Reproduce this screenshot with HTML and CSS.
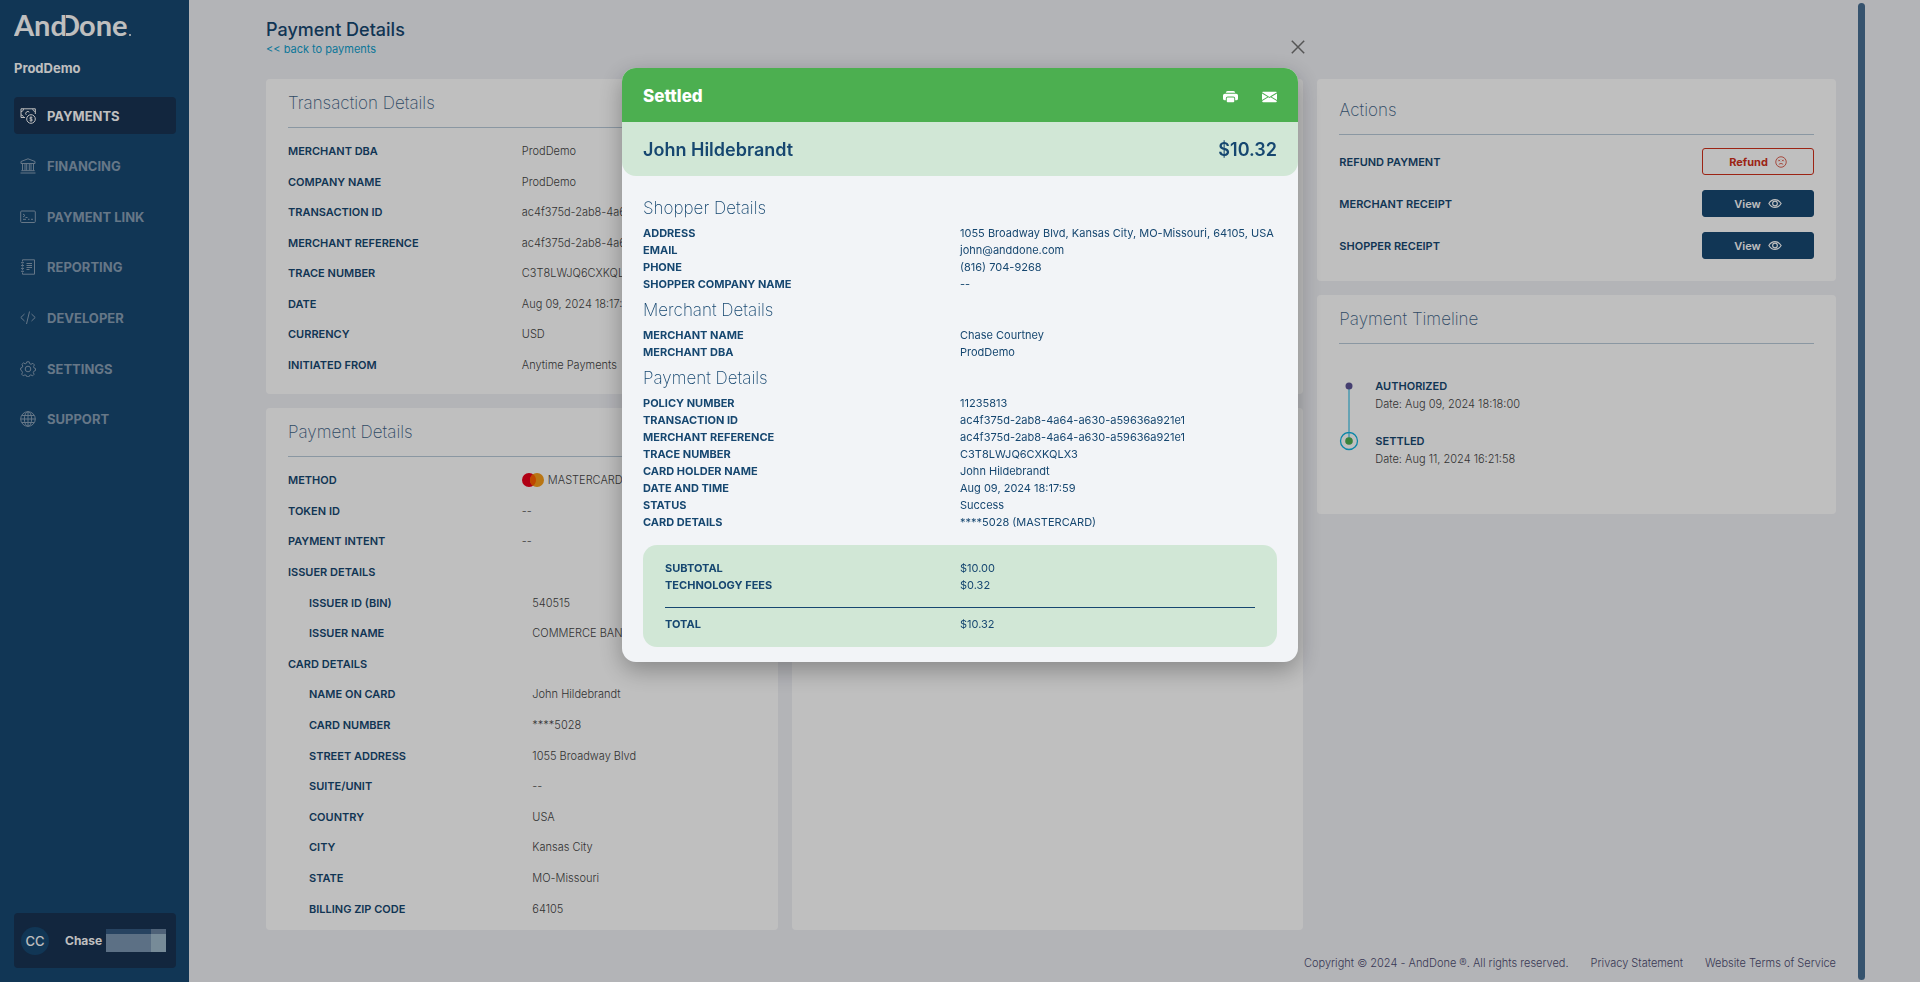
FILE: index.html
```html
<!DOCTYPE html>
<html lang="en">
<head>
<meta charset="utf-8">
<title>Payment Details</title>
<link rel="stylesheet" href="styles.css">
</head>
<body>
<div class="app">
  <aside class="sidebar">
    <svg class="logo" viewBox="0 0 120 38" role="img" aria-label="AndDone">
      <defs><clipPath id="bowl"><rect x="52" y="0" width="30" height="38"/></clipPath></defs>
      <text x="0" y="29">And</text>
      <text x="44" y="29" clip-path="url(#bowl)">D</text>
      <text x="65" y="29">one</text>
      <circle cx="116" cy="28" r="1"/>
    </svg>
    <p class="tenant">ProdDemo</p>
    <nav class="nav">
      <a class="nav-item active" href="#">
        <svg class="icon" viewBox="0 0 16 16"><path d="M5 9.500H1V.8h14.300v5.200M1 3.500C2.600 3.500 3.500 2.500 3.500.8M12.800.8c0 1.500.8 2.500 2.500 2.700M1 7c1.500 0 2.300.8 2.500 2.500"/><path d="M6.200 6.800A2 2 0 1 1 9.300 4.200"/><circle cx="11" cy="11" r="4.300"/><path d="M12.400 9.700c-.7-.8-2.700-.7-2.700.4s2.700.7 2.700 1.900-2 1.200-2.800.3M11 8.600v4.900"/></svg>PAYMENTS</a>
      <a class="nav-item" href="#">
        <svg class="icon" viewBox="0 0 16 16"><path d="M1 5.500v-2L8 .8l7 2.700v2zM2.500 5.500v7M5 5.500v7M6.700 5.500v7M9.300 5.500v7M11 5.500v7M13.500 5.500v7M1.300 12.700h13.400M.5 15h15"/></svg>FINANCING</a>
      <a class="nav-item" href="#">
        <svg class="icon" viewBox="0 0 16 16"><rect x=".7" y="2" width="14.600" height="11.500" rx="1"/><path d="M3 5l2 1.500L3 8M3 10.300h3M5.500 8.500h2M8 10.300h1.500M11 10.300h2"/></svg>PAYMENT LINK</a>
      <a class="nav-item" href="#">
        <svg class="icon" viewBox="0 0 16 16"><path d="M2.500 2.500V.8h12v14.400h-12v-1.700M2.500 4.800v1M2.500 7.500v1M2.500 10.200v1M1 3.700h3M1 6.600h3M1 9.400h3M1 12.300h3M6.500 4.500h5.500M6.500 6.500h5.500M6.500 8.500h5.500M6.500 10.500h3"/></svg>REPORTING</a>
      <a class="nav-item" href="#">
        <svg class="icon" viewBox="0 0 16 16"><path d="M4.500 4L.8 7.500l3.700 3.500M11.500 4l3.700 3.500-3.700 3.500M9.500 1.500l-3 12.500"/></svg>DEVELOPER</a>
      <a class="nav-item" href="#">
        <svg class="icon" viewBox="0 0 16 16"><circle cx="8" cy="8" r="2.800"/><path d="M6.800.8h2.400l.5 1.900 1.300.6 1.900-1 1.500 1.600-.9 1.800.5 1.200 1.500.6v2l-1.700.8-.5 1.300.8 1.700-1.500 1.500-1.800-.9-1.300.6-.5 1.300H6.900l-.6-1.400-1.400-.5-1.700.9-1.500-1.600.8-1.800-.5-1.200L.7 9.100V7l1.500-.6.6-1.300-.9-1.700 1.600-1.500 1.700.9 1.100-.5z"/></svg>SETTINGS</a>
      <a class="nav-item" href="#">
        <svg class="icon" viewBox="0 0 16 16"><circle cx="8" cy="8" r="7.300"/><ellipse cx="8" cy="8" rx="3.600" ry="7.300"/><path d="M8 .7v14.600M.7 8h14.600M2 4.500h12M2 11.500h12"/></svg>SUPPORT</a>
    </nav>
    <div class="user">
      <span class="avatar">CC</span>
      <span class="user-name">Chase</span>
      <span class="mask"><i class="m1"></i><i class="m2"></i><i class="m3"></i><i class="m4"></i></span>
    </div>
  </aside>

  <main class="main">
    <header class="page-head">
      <h1>Payment Details</h1>
      <a href="#">&lt;&lt; back to payments</a>
    </header>
    <div class="columns">
      <div class="detail-grid">
        <section class="card">
          <h2>Transaction Details</h2>
          <dl class="rows">
            <div><dt>MERCHANT DBA</dt><dd>ProdDemo</dd></div>
            <div><dt>COMPANY NAME</dt><dd>ProdDemo</dd></div>
            <div><dt>TRANSACTION ID</dt><dd>ac4f375d-2ab8-4a64-a630-a59636a921e1</dd></div>
            <div><dt>MERCHANT REFERENCE</dt><dd>ac4f375d-2ab8-4a64-a630-a59636a921e1</dd></div>
            <div><dt>TRACE NUMBER</dt><dd>C3T8LWJQ6CXKQLX3</dd></div>
            <div><dt>DATE</dt><dd>Aug 09, 2024 18:17:59</dd></div>
            <div><dt>CURRENCY</dt><dd>USD</dd></div>
            <div><dt>INITIATED FROM</dt><dd>Anytime Payments</dd></div>
          </dl>
        </section>
        <section class="card"></section>
        <section class="card card-long">
          <h2>Payment Details</h2>
          <dl class="rows">
            <div><dt>METHOD</dt><dd class="method"><svg class="mc" viewBox="0 0 22 14"><circle cx="7" cy="7" r="7" fill="#eb001b"/><circle cx="15" cy="7" r="7" fill="#f79e1b"/><path d="M11 1.260a7 7 0 0 1 0 11.480a7 7 0 0 1 0-11.480z" fill="#ff5f00"/></svg>MASTERCARD</dd></div>
            <div><dt>TOKEN ID</dt><dd>--</dd></div>
            <div><dt>PAYMENT INTENT</dt><dd>--</dd></div>
            <div><dt>ISSUER DETAILS</dt><dd></dd></div>
            <div class="sub"><dt>ISSUER ID (BIN)</dt><dd>540515</dd></div>
            <div class="sub"><dt>ISSUER NAME</dt><dd>COMMERCE BANK</dd></div>
            <div><dt>CARD DETAILS</dt><dd></dd></div>
            <div class="sub"><dt>NAME ON CARD</dt><dd>John Hildebrandt</dd></div>
            <div class="sub"><dt>CARD NUMBER</dt><dd>****5028</dd></div>
            <div class="sub"><dt>STREET ADDRESS</dt><dd>1055 Broadway Blvd</dd></div>
            <div class="sub"><dt>SUITE/UNIT</dt><dd>--</dd></div>
            <div class="sub"><dt>COUNTRY</dt><dd>USA</dd></div>
            <div class="sub"><dt>CITY</dt><dd>Kansas City</dd></div>
            <div class="sub"><dt>STATE</dt><dd>MO-Missouri</dd></div>
            <div class="sub"><dt>BILLING ZIP CODE</dt><dd>64105</dd></div>
          </dl>
        </section>
        <section class="card"></section>
      </div>

      <div class="side">
        <section class="card actions">
          <h2>Actions</h2>
          <div class="action"><span id="a1">REFUND PAYMENT</span>
            <button class="btn btn-outline" aria-describedby="a1">Refund <svg class="face" viewBox="0 0 16 16"><circle cx="8" cy="8" r="7"/><path d="M5 11.500c1.500-2 4.500-2 6 0M4.500 5l2 2M6.500 5l-2 2M9.500 5l2 2M11.500 5l-2 2"/></svg></button></div>
          <div class="action"><span id="a2">MERCHANT RECEIPT</span>
            <button class="btn" aria-describedby="a2">View <svg class="eye" viewBox="0 0 16 12"><path d="M1 6c3.500-6 10.500-6 14 0c-3.500 6-10.500 6-14 0z"/><circle cx="8" cy="6" r="2.700"/></svg></button></div>
          <div class="action"><span id="a3">SHOPPER RECEIPT</span>
            <button class="btn" aria-describedby="a3">View <svg class="eye" viewBox="0 0 16 12"><path d="M1 6c3.500-6 10.500-6 14 0c-3.500 6-10.500 6-14 0z"/><circle cx="8" cy="6" r="2.700"/></svg></button></div>
        </section>
        <section class="card">
          <h2>Payment Timeline</h2>
          <ol class="timeline">
            <li><svg class="node" viewBox="0 0 20 55"><path d="M10 9v46" stroke="#10b4e0" stroke-width="1"/><circle cx="10" cy="9" r="3.500" fill="#5c5596"/></svg>
              <div><strong>AUTHORIZED</strong><span>Date: Aug 09, 2024 18:18:00</span></div></li>
            <li><svg class="node" viewBox="0 0 20 55"><circle cx="10" cy="9" r="8.500" fill="none" stroke="#10b4e0" stroke-width="1.300"/><path d="M10 0v9" stroke="#10b4e0"/><circle cx="10" cy="9" r="3.800" fill="#4caf50"/></svg>
              <div><strong>SETTLED</strong><span>Date: Aug 11, 2024 16:21:58</span></div></li>
          </ol>
        </section>
      </div>
    </div>
    <footer class="footer">
      <span>Copyright © 2024 - AndDone ®. All rights reserved.</span>
      <a href="#">Privacy Statement</a>
      <a href="#">Website Terms of Service</a>
    </footer>
  </main>
  <div class="scroll-thumb"></div>
</div>

<div class="overlay">
  <div class="modal" role="dialog" aria-label="Settled payment">
    <button class="close" aria-label="Close"><svg viewBox="0 0 14 14"><path d="M.8.8l12.400 12.400M13.200.8L.8 13.200"/></svg></button>
    <header class="modal-head">
      <h2>Settled</h2>
      <div class="tools">
        <button aria-label="Print"><svg viewBox="0 0 16 16"><path d="M5 2a2 2 0 0 0-2 2h10a2 2 0 0 0-2-2zm6 7H5a1 1 0 0 0-1 1v3a1 1 0 0 0 1 1h6a1 1 0 0 0 1-1v-3a1 1 0 0 0-1-1"/><path d="M0 7a2 2 0 0 1 2-2h12a2 2 0 0 1 2 2v3a2 2 0 0 1-2 2h-1v-2a2 2 0 0 0-2-2H5a2 2 0 0 0-2 2v2H2a2 2 0 0 1-2-2z"/></svg></button>
        <button aria-label="Email"><svg viewBox="0 0 16 16"><path d="M.05 3.555A1 1 0 0 1 1 2.800h14a1 1 0 0 1 .95.755L8 8.414zM0 4.697v7.104l5.803-3.558zM6.761 8.830l-6.570 4.027A1 1 0 0 0 1 14h14a1 1 0 0 0 .808-1.144l-6.570-4.027L8 9.586zm3.436-.586L16 11.801V4.697z"/></svg></button>
      </div>
    </header>
    <div class="summary"><span>John Hildebrandt</span><span>$10.32</span></div>
    <div class="modal-body">
      <h3>Shopper Details</h3>
      <dl class="facts">
        <dt>ADDRESS</dt><dd>1055 Broadway Blvd, Kansas City, MO-Missouri, 64105, USA</dd>
        <dt>EMAIL</dt><dd>john@anddone.com</dd>
        <dt>PHONE</dt><dd>(816) 704-9268</dd>
        <dt>SHOPPER COMPANY NAME</dt><dd>--</dd>
      </dl>
      <h3>Merchant Details</h3>
      <dl class="facts">
        <dt>MERCHANT NAME</dt><dd>Chase Courtney</dd>
        <dt>MERCHANT DBA</dt><dd>ProdDemo</dd>
      </dl>
      <h3>Payment Details</h3>
      <dl class="facts">
        <dt>POLICY NUMBER</dt><dd>11235813</dd>
        <dt>TRANSACTION ID</dt><dd>ac4f375d-2ab8-4a64-a630-a59636a921e1</dd>
        <dt>MERCHANT REFERENCE</dt><dd>ac4f375d-2ab8-4a64-a630-a59636a921e1</dd>
        <dt>TRACE NUMBER</dt><dd>C3T8LWJQ6CXKQLX3</dd>
        <dt>CARD HOLDER NAME</dt><dd>John Hildebrandt</dd>
        <dt>DATE AND TIME</dt><dd>Aug 09, 2024 18:17:59</dd>
        <dt>STATUS</dt><dd>Success</dd>
        <dt>CARD DETAILS</dt><dd>****5028 (MASTERCARD)</dd>
      </dl>
      <div class="totals">
        <dl class="facts">
          <dt>SUBTOTAL</dt><dd>$10.00</dd>
          <dt>TECHNOLOGY FEES</dt><dd>$0.32</dd>
        </dl>
        <dl class="facts total">
          <dt>TOTAL</dt><dd>$10.32</dd>
        </dl>
      </div>
    </div>
  </div>
</div>
</body>
</html>
```
FILE: styles.css
```css
* { box-sizing: border-box; }
body, h1, h2, h3, p, dl, dd, ol { margin: 0; }
body { font: 300 11px/18px Inter, "Open Sans", sans-serif; color: #444; background: #eff0f5; }
a { text-decoration: none; color: inherit; }
button { font: inherit; cursor: pointer; }
svg { display: block; flex: none; }

.app { display: flex; min-height: 100vh; padding-right: 55px; }

/* Sidebar */
.sidebar { width: 189px; flex: none; display: flex; flex-direction: column; padding: 7px 13px 14px 14px; background: #174872; color: #fff; }
.logo { width: 120px; height: 38px; fill: #fff; font: 700 29px Lato, sans-serif; }
.tenant { margin: 14px 0 20px; font-size: 13px; font-weight: 700; }
.nav { display: flex; flex-direction: column; justify-content: space-between; height: 341px; }
.nav-item { display: flex; align-items: center; gap: 11px; height: 37px; padding: 0 6px; border-radius: 4px; font-size: 13px; font-weight: 700; color: #889fb5; }
.nav-item.active { background: #183353; color: #fff; }
.icon { width: 16px; height: 16px; fill: none; stroke: currentColor; }
.user { margin-top: auto; display: flex; align-items: center; height: 55px; padding: 0 7px; border-radius: 4px; background: #183353; font-size: 13px; }
.avatar { width: 28px; height: 28px; border-radius: 50%; background: #174872; line-height: 28px; text-align: center; font-weight: 500; }
.user-name { margin-left: 16px; font-size: 12px; font-weight: 700; }
.mask { display: grid; grid-template: 5px 18px / 45px 15px; margin-left: auto; margin-right: 3px; }
.m1 { background: #345a82; }
.m2 { background: #6a83a0; }
.m3 { background: #7b96b2; }
.m4 { background: #9fbacb; }

/* Page */
.main { flex: 1; min-width: 0; display: flex; flex-direction: column; padding: 19px 22px 10px 77px; }
.page-head { height: 60px; }
h1 { font-size: 18px; line-height: 22px; font-weight: 500; color: #164770; }
.page-head a { display: block; line-height: 16px; font-weight: 400; color: #109fcc; }
.columns { flex: 1; display: flex; gap: 14px; }
.detail-grid { flex: 2 1 0; display: grid; grid-template: 315fr 522fr / 1fr 1fr; gap: 14px; }
.side { flex: 1 1 0; display: flex; flex-direction: column; gap: 14px; }
.card { display: flex; flex-direction: column; min-width: 0; padding: 0 22px 14px; border-radius: 4px; background: #fff; }
.card-long { padding-bottom: 6px; }
.card h2 { height: 49px; border-bottom: 1px solid #b9cad9; font-size: 17px; line-height: 49px; font-weight: 200; color: #3f6488; }
.rows { flex: 1; display: flex; flex-direction: column; padding-top: 8px; }
.rows div { flex: 1; display: grid; grid-template-columns: 1fr 1fr; align-items: center; }
.rows .sub { padding-left: 21px; }
dt, .action, strong { font-weight: 600; color: #164770; }
dd { white-space: nowrap; }
.method { display: flex; align-items: center; gap: 4px; }
.mc { width: 22px; height: 14px; }

.actions { padding-top: 7px; padding-bottom: 22px; gap: 15px; }
.actions h2 { margin-bottom: -2px; }
.action { display: flex; justify-content: space-between; align-items: center; }
.btn { display: flex; align-items: center; justify-content: center; gap: 7px; width: 112px; height: 27px; padding: 0; border: 1px solid #174872; border-radius: 3px; background: #174872; color: #fff; font-size: 11px; font-weight: 600; }
.btn svg { fill: none; stroke: currentColor; }
.btn-outline { background: none; border-color: #d0301b; color: #d0301b; font-weight: 700; }
.face { width: 12px; height: 12px; }
.eye { width: 14px; height: 11px; stroke-width: 1.300; }

.timeline { list-style: none; padding: 33px 0 13px; }
.timeline li { display: flex; gap: 16px; height: 55px; }
.timeline strong, .timeline span { display: block; }
.node { width: 20px; height: 55px; }

.footer { display: flex; justify-content: flex-end; gap: 22px; margin-top: 24px; color: #4c4c70; }
.scroll-thumb { width: 7px; flex: none; margin: 3px 0 2px; border-radius: 4px; background: #496f93; }

/* Receipt dialog */
.overlay { position: fixed; inset: 0; display: flex; justify-content: center; align-items: flex-start; padding-top: 68px; background: rgba(0, 0, 0, .25); }
.modal { position: relative; width: 676px; border-radius: 14px; background: #f2f4f7; color: #164770; box-shadow: 0 8px 24px rgba(0, 0, 0, .3); font-weight: 400; }
.close { position: absolute; top: -28px; right: -7px; width: 14px; height: 14px; padding: 0; border: 0; background: none; }
.close svg { width: 14px; height: 14px; stroke: #555; stroke-width: 1.500; }
.modal-head, .summary { display: flex; justify-content: space-between; align-items: center; height: 54px; padding: 2px 21px 0; font-size: 18px; }
.modal-head { border-radius: 14px 14px 0 0; background: #4caf50; color: #fff; }
.modal-head h2 { font-size: 17px; font-weight: 800; }
.tools { display: flex; gap: 24px; }
.tools button { padding: 0; border: 0; background: none; color: inherit; }
.tools svg { width: 15px; height: 15px; fill: currentColor; }
.summary { border-radius: 0 0 14px 14px; background: #d1e7d6; font-weight: 600; }
.modal-body { padding: 15px 21px; }
h3 { font-size: 17px; line-height: 34px; font-weight: 200; }
.facts { display: grid; grid-template-columns: 1fr 1fr; line-height: 17px; }
.facts dt { font-weight: 700; }
.totals { margin-top: 14px; padding: 15px 22px 14px; border-radius: 14px; background: #d1e7d6; }
.total { margin-top: 13px; padding-top: 8px; border-top: 1px solid #164770; }
```
